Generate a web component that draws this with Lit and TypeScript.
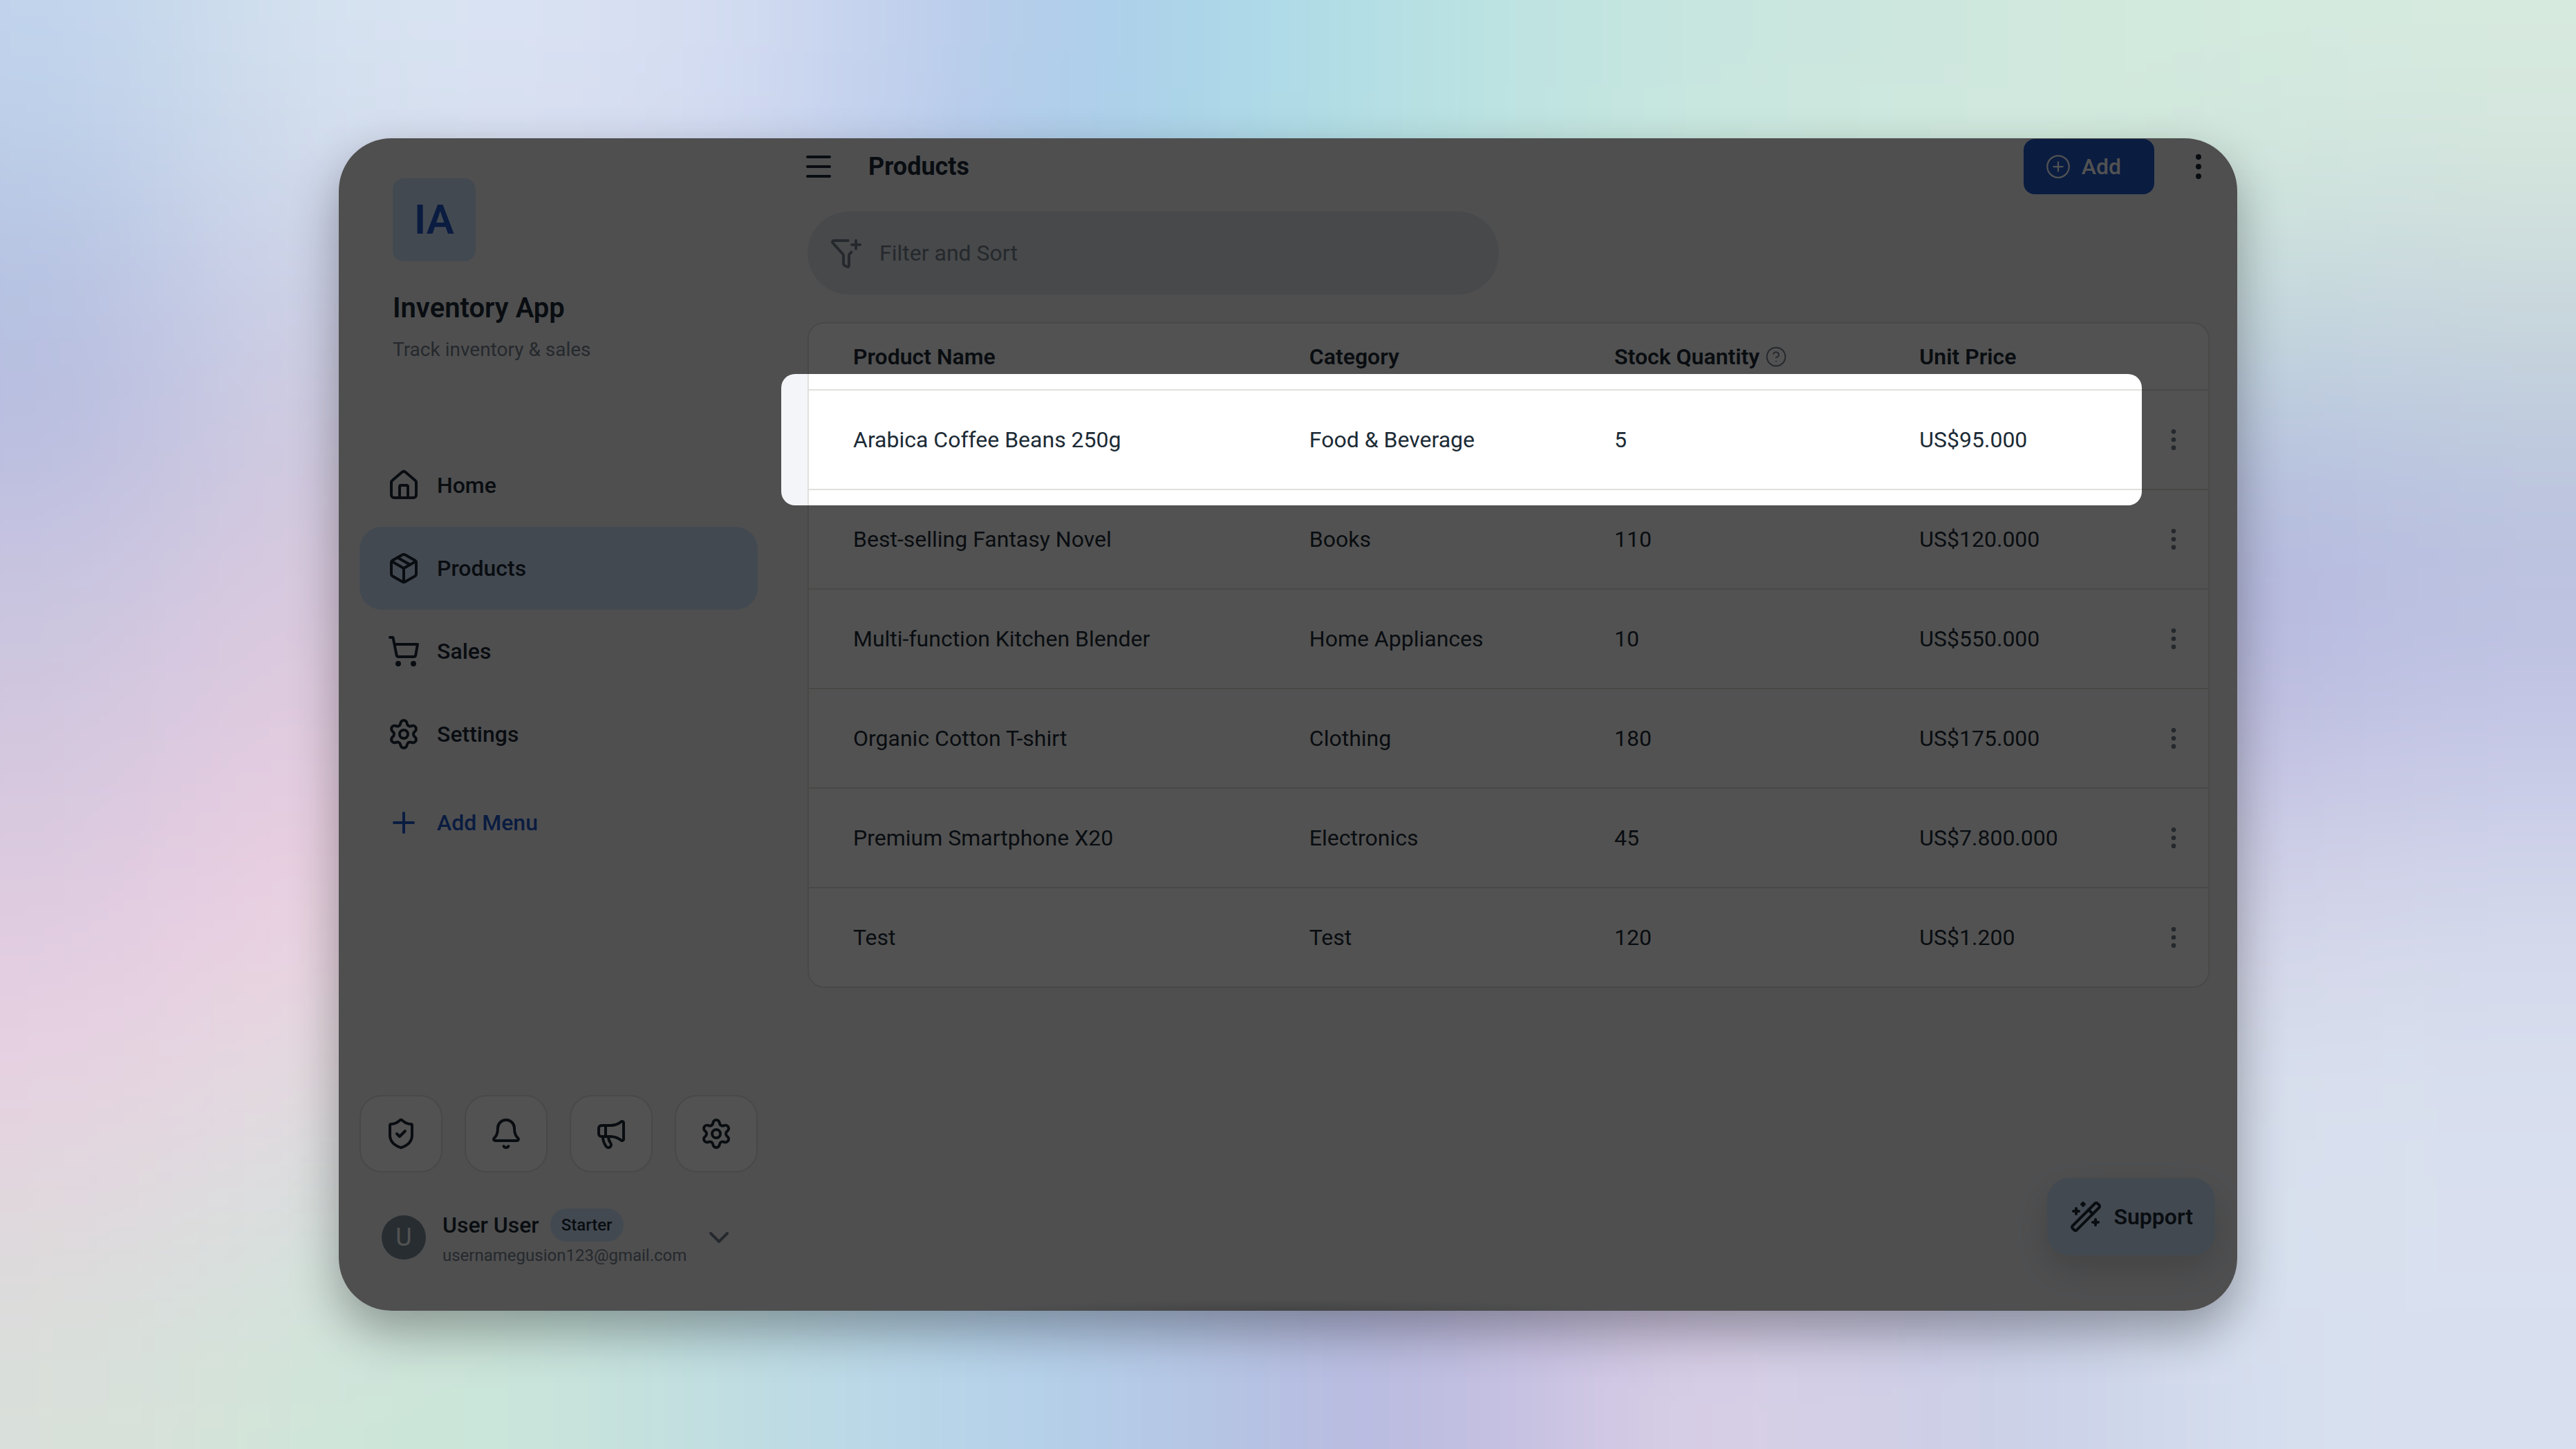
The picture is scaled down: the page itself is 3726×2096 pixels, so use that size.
import { LitElement, css, html, svg } from "lit";
import type { SVGTemplateResult } from "lit";
import { classMap } from "lit/directives/class-map.js";

interface Product {
  name: string;
  category: string;
  stock: number;
  price: string;
}

interface NavItem {
  label: string;
  icon: string;
  active?: boolean;
}

/**
 * Icon shapes on a 24 unit grid, stroked with the current color.
 */
const icons: Record<string, SVGTemplateResult> = {
  home: svg`
    <path d="M15 21v-8a1 1 0 0 0-1-1h-4a1 1 0 0 0-1 1v8" />
    <path d="M3 10a2 2 0 0 1 .709-1.528l7-5.999a2 2 0 0 1 2.582 0l7 5.999A2 2 0 0 1 21 10v9a2 2 0 0 1-2 2H5a2 2 0 0 1-2-2z" />
  `,
  box: svg`
    <path d="M11 21.73a2 2 0 0 0 2 0l7-4A2 2 0 0 0 21 16V8a2 2 0 0 0-1-1.73l-7-4a2 2 0 0 0-2 0l-7 4A2 2 0 0 0 3 8v8a2 2 0 0 0 1 1.73z" />
    <path d="M12 22V12" />
    <path d="M3.29 7 12 12l8.71-5" />
    <path d="m7.5 4.27 9 5.15" />
  `,
  cart: svg`
    <circle cx="8" cy="21" r="1" />
    <circle cx="19" cy="21" r="1" />
    <path d="M2 2h2.2l1.1 5.2 1.5 7.6A1.5 1.5 0 0 0 8.2 16h11a1.4 1.4 0 0 0 1.4-1.1L22 7H5.3" />
  `,
  gear: svg`
    <path d="M9.671 4.136a2.34 2.34 0 0 1 4.659 0 2.34 2.34 0 0 0 3.319 1.915 2.34 2.34 0 0 1 2.33 4.033 2.34 2.34 0 0 0 0 3.831 2.34 2.34 0 0 1-2.33 4.033 2.34 2.34 0 0 0-3.319 1.915 2.34 2.34 0 0 1-4.659 0 2.34 2.34 0 0 0-3.32-1.915 2.34 2.34 0 0 1-2.33-4.033 2.34 2.34 0 0 0 0-3.831A2.34 2.34 0 0 1 6.35 6.051a2.34 2.34 0 0 0 3.319-1.915" />
    <circle cx="12" cy="12" r="3" />
  `,
  plus: svg`<path d="M5 12h14M12 5v14" />`,
  shield: svg`
    <path d="M20 13c0 5-3.5 7.5-7.66 8.95a1 1 0 0 1-.67-.01C7.5 20.5 4 18 4 13V6a1 1 0 0 1 1-1c2 0 4.5-1.2 6.24-2.72a1.17 1.17 0 0 1 1.52 0C14.51 3.81 17 5 19 5a1 1 0 0 1 1 1z" />
    <path d="m9 12 2 2 4-4" />
  `,
  bell: svg`
    <path d="M10.268 21a2 2 0 0 0 3.464 0" />
    <path d="M3.262 15.326A1 1 0 0 0 4 17h16a1 1 0 0 0 .74-1.673C19.41 13.956 18 12.499 18 8A6 6 0 0 0 6 8c0 4.499-1.411 5.956-2.738 7.326" />
  `,
  megaphone: svg`
    <path d="M11 6a13 13 0 0 0 8.4-2.8A1 1 0 0 1 21 4v12a1 1 0 0 1-1.6.8A13 13 0 0 0 11 14H5a2 2 0 0 1-2-2V8a2 2 0 0 1 2-2z" />
    <path d="M6 14a12 12 0 0 0 2.4 7.2 2 2 0 0 0 3.2-2.4A8 8 0 0 1 10 14" />
    <path d="M8 6v8" />
  `,
  chevron: svg`<path d="m6 9 6 6 6-6" />`,
  menu: svg`<path d="M4 5h16M4 12h16M4 19h16" />`,
  funnel: svg`
    <path d="M13.354 3H3a1 1 0 0 0-.742 1.67l7.225 7.989A2 2 0 0 1 10 14v6a1 1 0 0 0 .553.895l2 1A1 1 0 0 0 14 21v-7a2 2 0 0 1 .517-1.341l1.218-1.348" />
    <path d="M16 6h6M19 3v6" />
  `,
  addCircle: svg`
    <circle cx="12" cy="12" r="10.5" />
    <path d="M7.6 12h8.8M12 7.6v8.8" />
  `,
  dots: svg`
    <circle cx="12" cy="5" r="1" />
    <circle cx="12" cy="12" r="1" />
    <circle cx="12" cy="19" r="1" />
  `,
  help: svg`
    <circle cx="12" cy="12" r="10" />
    <path d="M9.09 9a3 3 0 0 1 5.83 1c0 2-3 3-3 3M12 17h.01" />
  `,
  wand: svg`
    <path d="m21.64 3.64-1.28-1.28a1.21 1.21 0 0 0-1.72 0L2.36 18.64a1.21 1.21 0 0 0 0 1.72l1.28 1.28a1.2 1.2 0 0 0 1.72 0L21.64 5.36a1.2 1.2 0 0 0 0-1.72" />
    <path d="m14 7 3 3M5 6v4M19 14v4M10 2v2M7 8H3M21 16h-4M11 3H9" />
  `,
};

const navItems: NavItem[] = [
  { label: "Home", icon: "home" },
  { label: "Products", icon: "box", active: true },
  { label: "Sales", icon: "cart" },
  { label: "Settings", icon: "gear" },
];

const quickActions = [
  { label: "Security", icon: "shield" },
  { label: "Notifications", icon: "bell" },
  { label: "Announcements", icon: "megaphone" },
  { label: "Preferences", icon: "gear" },
];

const products: Product[] = [
  { name: "Arabica Coffee Beans 250g", category: "Food & Beverage", stock: 5, price: "US$95.000" },
  { name: "Best-selling Fantasy Novel", category: "Books", stock: 110, price: "US$120.000" },
  { name: "Multi-function Kitchen Blender", category: "Home Appliances", stock: 10, price: "US$550.000" },
  { name: "Organic Cotton T-shirt", category: "Clothing", stock: 180, price: "US$175.000" },
  { name: "Premium Smartphone X20", category: "Electronics", stock: 45, price: "US$7.800.000" },
  { name: "Test", category: "Test", stock: 120, price: "US$1.200" },
];

/**
 * Wallpaper mesh, 16 columns by 9 rows. Middle rows only list the cells that
 * show on each side of the window: left ones first, then right ones.
 */
const meshColumns = 16;
const meshRows: [string, string][] = [
  [
    "c0d3ec cfdeec d9e4f2 d9e1f2 d4ddf1 c3d0ed b0cbe9 abd6ea",
    "b3dfe4 bfe3e1 c7e6df cbe6de d0e8dd d2e9dd d4eadf d7eade",
  ],
  [
    "b5c4e2 ccd3e9 cfd5e8 d3daee cfd5ee bccbec a9cae8 a9d5e6",
    "b4e0e2 bfe4df cae8dd cfe9dc d2eadc cde3da cddedd cfdedc",
  ],
  ["b6bbdf cac9e1 d0cde2", "b8cadb bccbe0 c0cddd"],
  ["c6c4e0 d6c9e0 d8c6d8", "b0b2dc b5badf b9bfdf"],
  ["d1c7dd dfcae0 e2cbdd", "bcbade c1c2e2 c4c6e5"],
  ["dccae0 eccde2 ead3df", "cfcfe6 d2d3e8 d2d6ea"],
  ["e8d0e2 e6d7e0 e3dade", "d6dbea d8dfed d7deed"],
  [
    "dfd7dc dcdddf d3dfdb c5e1d8 bddbe0 b8d5e6 b4cdea b3c3e4",
    "b8bbdf c6bfe2 d2c8e4 cbc8e4 c8cce6 d6dfec d8e0ee d9dfee",
  ],
  [
    "d9dfda d3e4d9 cbe6d8 c9e4da c0dde2 b9d7e8 b4d0ea b5c5e4",
    "b8badf c7c1e2 dacfe5 d2cfe6 c9cfe7 d1daec d8e1ef d8e0f0",
  ],
];

/**
 * Draws one icon at the size set by its class.
 */
const icon = (name: string, size = "icon") => html`
  <svg class=${size} viewBox="0 0 24 24" aria-hidden="true">${icons[name]}</svg>
`;

/**
 * Draws one mesh cell, stretched outwards when it touches an edge.
 */
const meshCell = (color: string, column: number, row: number) => {
  const left = column === 0 ? -3 : column;
  const right = column === meshColumns - 1 ? meshColumns + 3 : column + 1;
  const top = row === 0 ? -3 : row;
  const bottom = row === meshRows.length - 1 ? row + 4 : row + 1;

  return svg`<rect x=${left} y=${top} width=${right - left} height=${bottom - top} fill=${`#${color}`} />`;
};

/**
 * Inventory products screen with a spotlight on one table row.
 */
export class AppRoot extends LitElement {
  static properties = {
    highlighted: { type: Number },
  };

  static styles = css`
    :host {
      --ink: #1c2b36;
      --muted: #75808c;
      --accent: #1f57c8;
      --accent-soft: #cfe4fb;
      --line: #e0e0dc;
      --surface: #f4f5f8;

      display: block;
      color: var(--ink);
      font-family: Roboto, "Liberation Sans", sans-serif;
      font-size: 32px;
      line-height: 40px;
    }

    *,
    *::before,
    *::after {
      box-sizing: border-box;
    }

    button {
      display: flex;
      align-items: center;
      margin: 0;
      padding: 0;
      border: 0;
      background: none;
      color: inherit;
      font: inherit;
      cursor: pointer;
    }

    .icon {
      display: block;
      flex: none;
      width: 48px;
      height: 48px;
      fill: none;
      stroke: currentColor;
      stroke-width: 2;
      stroke-linecap: round;
      stroke-linejoin: round;
    }

    .icon.medium {
      width: 40px;
      height: 40px;
    }

    .icon.thin {
      width: 36px;
      height: 36px;
      stroke-width: 1.5;
    }

    .icon.small {
      width: 32px;
      height: 32px;
      stroke-width: 1.5;
    }

    .stage {
      position: relative;
      z-index: 0;
      display: flex;
      min-height: 100vh;
      padding: 200px 490px;
      box-shadow: inset -4px 0 0 rgb(255 255 255 / 60%);
    }

    .wallpaper {
      position: absolute;
      z-index: -1;
      inset: 0;
      width: 100%;
      height: 100%;
    }

    .window {
      position: relative;
      display: flex;
      flex: 1;
      min-width: 0;
      overflow: hidden;
      border-radius: 76px;
      background: var(--surface);
      box-shadow: 0 30px 70px rgb(0 0 0 / 33%);
    }

    .window::after {
      position: absolute;
      right: 33%;
      bottom: 0;
      left: 33%;
      height: 16px;
      background: radial-gradient(
        ellipse at 50% 100%,
        rgb(0 0 0 / 14%),
        transparent 70%
      );
      content: "";
    }

    .sidebar {
      display: flex;
      flex: none;
      flex-direction: column;
      width: 638px;
      padding: 58px 32px 64px 30px;
    }

    .brand {
      padding-left: 48px;
    }

    .logo {
      display: grid;
      place-items: center;
      width: 120px;
      height: 120px;
      border-radius: 16px;
      background: var(--accent-soft);
      color: var(--accent);
      font-size: 60px;
      font-weight: 600;
    }

    .brand-name {
      margin: 44px 0 18px;
      font-size: 40px;
      font-weight: 600;
      line-height: 48px;
    }

    .tagline {
      margin: 0;
      color: var(--muted);
      font-size: 28px;
      line-height: 36px;
    }

    .nav {
      display: flex;
      flex-direction: column;
      margin-top: 118px;
    }

    .nav-item {
      display: flex;
      align-items: center;
      gap: 24px;
      height: 120px;
      padding: 0 40px;
      border-radius: 32px;
      color: inherit;
      font-weight: 500;
      text-decoration: none;
    }

    .nav-item.active {
      background: var(--accent-soft);
    }

    .nav-item.add {
      margin-top: 8px;
      color: var(--accent);
    }

    .quick {
      display: flex;
      justify-content: space-between;
      margin-top: auto;
    }

    .quick-button {
      justify-content: center;
      width: 120px;
      height: 112px;
      border: 2px solid var(--line);
      border-radius: 32px;
      background: #fff;
    }

    .user {
      gap: 24px;
      margin-top: 52px;
      padding: 0 32px;
      text-align: left;
    }

    .avatar {
      display: grid;
      flex: none;
      place-items: center;
      width: 64px;
      height: 64px;
      border-radius: 50%;
      background: #7a8c99;
      color: #fff;
      font-size: 36px;
    }

    .user-text {
      flex: 1;
      min-width: 0;
    }

    .user-name {
      display: flex;
      align-items: center;
      gap: 16px;
      height: 48px;
      margin-bottom: 4px;
      font-weight: 500;
    }

    .plan {
      padding: 4px 16px;
      border-radius: 24px;
      background: var(--accent-soft);
      font-size: 24px;
    }

    .email {
      display: block;
      color: var(--muted);
      font-size: 24px;
      line-height: 32px;
    }

    .chevron {
      display: block;
      color: var(--muted);
    }

    .main {
      flex: 1;
      min-width: 0;
    }

    .topbar {
      display: flex;
      align-items: center;
      height: 82px;
      padding: 0 32px;
    }

    .page-title {
      flex: 1;
      margin: 0 0 0 48px;
      font-size: 36px;
      font-weight: 700;
    }

    .add-button {
      gap: 16px;
      height: 80px;
      margin-right: 40px;
      padding: 0 48px 0 32px;
      border-radius: 16px;
      background: var(--accent);
      color: #fff;
      font-weight: 500;
    }

    .content {
      padding: 24px 40px 40px;
    }

    .filter {
      gap: 24px;
      width: 1000px;
      max-width: 100%;
      height: 120px;
      padding: 0 32px;
      border-radius: 60px;
      background: #e0e3e8;
      color: var(--muted);
    }

    .card {
      margin-top: 40px;
      border: 2px solid var(--line);
      border-radius: 24px;
      background: #fff;
    }

    .table {
      width: 100%;
      border-spacing: 0;
      table-layout: fixed;
    }

    .col-name {
      width: 32.6%;
    }

    .col-value {
      width: 21.8%;
    }

    .table th,
    .table td {
      height: 144px;
      padding: 0 0 0 64px;
      border-bottom: 2px solid var(--line);
      text-align: left;
      font-weight: 400;
    }

    .table thead th {
      height: 97px;
      font-weight: 600;
    }

    .table tbody tr {
      position: relative;
    }

    .table tbody tr:last-child > * {
      height: 142px;
      border-bottom: 0;
    }

    .table .menu-cell {
      width: 102px;
      padding-left: 32px;
      color: var(--muted);
    }

    .with-help {
      display: flex;
      align-items: center;
      gap: 8px;
    }

    .help {
      color: var(--muted);
    }

    .spotlight {
      position: absolute;
      z-index: 2;
      inset: -24px 96px -22px -40px;
      border-radius: 20px;
      box-shadow: 0 0 0 4000px rgb(0 0 0 / 68%);
      pointer-events: none;
    }

    .support {
      position: absolute;
      right: 32px;
      bottom: 80px;
      gap: 16px;
      height: 112px;
      padding: 0 32px;
      border-radius: 32px;
      background: var(--accent-soft);
      box-shadow: 0 20px 48px rgb(0 0 0 / 14%);
      font-weight: 600;
    }
  `;

  declare highlighted: number;

  constructor() {
    super();

    this.highlighted = 0;
  }

  /**
   * Renders the wallpaper with the application window on top.
   */
  render() {
    return html`
      <div class="stage">
        ${this.#renderWallpaper()}
        <div class="window">
          ${this.#renderSidebar()}
          <main class="main">
            <header class="topbar">
              <button type="button" aria-label="Toggle menu">${icon("menu")}</button>
              <h1 class="page-title">Products</h1>
              <button type="button" class="add-button">
                ${icon("addCircle", "icon thin")}<span>Add</span>
              </button>
              <button type="button" aria-label="More options">${icon("dots")}</button>
            </header>
            <div class="content">
              <button type="button" class="filter">
                ${icon("funnel")}<span>Filter and Sort</span>
              </button>
              ${this.#renderTable()}
            </div>
          </main>
          <button type="button" class="support">
            ${icon("wand")}<span>Support</span>
          </button>
        </div>
      </div>
    `;
  }

  #renderWallpaper() {
    return html`
      <svg
        class="wallpaper"
        viewBox="0 0 16 9"
        preserveAspectRatio="none"
        aria-hidden="true"
      >
        <filter
          id="soften"
          filterUnits="userSpaceOnUse"
          x="-3"
          y="-3"
          width="22"
          height="15"
          color-interpolation-filters="sRGB"
        >
          <feGaussianBlur stdDeviation="0.55" />
        </filter>
        <g filter="url(#soften)">
          <rect x="-3" y="-3" width="22" height="15" fill="#cdd0e6" />
          ${meshRows.map(([left, right], row) => {
            const leftColors = left.split(" ");
            const rightColors = right.split(" ");
            const offset = meshColumns - rightColors.length;

            return [
              ...leftColors.map((color, index) => meshCell(color, index, row)),
              ...rightColors.map((color, index) => meshCell(color, offset + index, row)),
            ];
          })}
        </g>
      </svg>
    `;
  }

  #renderSidebar() {
    return html`
      <aside class="sidebar">
        <div class="brand">
          <div class="logo">IA</div>
          <h2 class="brand-name">Inventory App</h2>
          <p class="tagline">Track inventory &amp; sales</p>
        </div>
        <nav class="nav">
          ${navItems.map(
            (item) => html`
              <a
                class=${classMap({ "nav-item": true, active: !!item.active })}
                href="#"
                >${icon(item.icon)}<span>${item.label}</span></a
              >
            `,
          )}
          <a class="nav-item add" href="#">${icon("plus")}<span>Add Menu</span></a>
        </nav>
        <div class="quick">
          ${quickActions.map(
            (action) => html`
              <button type="button" class="quick-button" aria-label=${action.label}>
                ${icon(action.icon)}
              </button>
            `,
          )}
        </div>
        <button type="button" class="user">
          <span class="avatar">U</span>
          <span class="user-text">
            <span class="user-name">User User <span class="plan">Starter</span></span>
            <span class="email">usernamegusion123@gmail.com</span>
          </span>
          <span class="chevron">${icon("chevron")}</span>
        </button>
      </aside>
    `;
  }

  #renderTable() {
    return html`
      <div class="card">
        <table class="table">
          <colgroup>
            <col class="col-name" />
            <col class="col-value" />
            <col class="col-value" />
            <col />
            <col />
          </colgroup>
          <thead>
            <tr>
              <th scope="col">Product Name</th>
              <th scope="col">Category</th>
              <th scope="col">
                <span class="with-help">
                  Stock Quantity
                  <span class="help">${icon("help", "icon small")}</span>
                </span>
              </th>
              <th scope="col">Unit Price</th>
              <th class="menu-cell"></th>
            </tr>
          </thead>
          <tbody>
            ${products.map((product, index) => this.#renderRow(product, index))}
          </tbody>
        </table>
      </div>
    `;
  }

  #renderRow(product: Product, index: number) {
    return html`
      <tr>
        <td>
          ${product.name}
          ${index === this.highlighted
            ? html`<span class="spotlight"></span>`
            : null}
        </td>
        <td>${product.category}</td>
        <td>${product.stock}</td>
        <td>${product.price}</td>
        <td class="menu-cell">
          <button type="button" aria-label="Actions for ${product.name}">
            ${icon("dots", "icon medium")}
          </button>
        </td>
      </tr>
    `;
  }
}

customElements.define("app-root", AppRoot);
